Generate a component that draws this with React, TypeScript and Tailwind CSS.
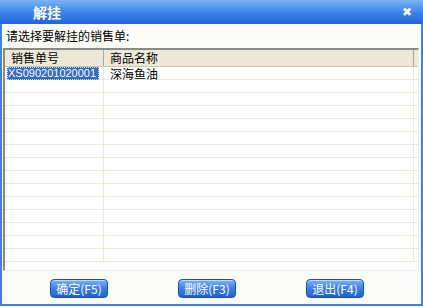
import React from 'react';

const font = { fontFamily: '"Noto Sans CJK SC", "DejaVu Sans", sans-serif' };

const rows = [
  { no: 'XS090201020001', name: '深海鱼油' },
  ...Array.from({ length: 14 }, () => ({ no: '', name: '' })),
];

function Btn({ label }: { label: string }) {
  return (
    <button
      className="w-[58px] h-[19px] rounded-[4px] border border-[#1c4fb8] bg-gradient-to-b from-[#7fb2f5] via-[#3b7ee8] to-[#245fd0] text-white text-[12px] leading-[17px] flex items-center justify-center shadow-[inset_0_1px_0_rgba(255,255,255,0.5)]"
      style={font}
    >
      {label}
    </button>
  );
}

export default function App() {
  return (
    <div className="w-[423px] h-[308px] bg-white" style={font}>
      <div className="w-[423px] h-[306px] flex flex-col bg-[#3d82e4] px-[2px] pb-[2px]">
        {/* title bar */}
        <div className="h-[24px] -mx-[2px] pl-[33px] pr-[20px] flex items-center justify-between bg-gradient-to-b from-[#79b4f4] via-[#3a86ea] to-[#2563d8]">
          <span className="text-white font-bold text-[14px]">解挂</span>
          <span className="text-white font-bold text-[12px] -mr-[9px] mt-[-2px]">✖</span>
        </div>
        <div className="flex-1 flex flex-col bg-[#fbfbf8]">
          <div className="h-[24px] pl-[4px] pt-[4px] text-[12px] leading-[16px] text-black">请选择要解挂的销售单:</div>
          <div className="mx-[1px] mr-[2px] border-t-2 border-l-2 border-t-[#8a8a86] border-l-[#8a8a86] border-r border-b border-r-[#f0f0ec] border-b-[#f0f0ec] bg-white h-[223px] overflow-hidden">
            <div className="flex h-[17px] bg-[#ece9d8] border-b border-[#c9c6b4] text-[12px] leading-[16px] text-black">
              <div className="w-[99px] pl-[6px] border-r border-[#aca899]">销售单号</div>
              <div className="w-[310px] pl-[6px] border-r border-[#aca899]">商品名称</div>
              <div className="flex-1" />
            </div>
            {rows.map((r, i) => (
              <div key={i} className="flex h-[13px] border-b border-[#ebe8dc] text-[12px] leading-[13px]">
                <div className="w-[99px] border-r border-[#ebe8dc] pl-[2px]">
                  {r.no && (
                    <span className="inline-block w-[92px] h-[13px] pl-[1px] bg-[#316ac5] text-white outline outline-1 outline-dotted outline-[#c8d8f0] -outline-offset-1 text-[11px] leading-[13px] whitespace-nowrap overflow-hidden" style={{ fontFamily: '"Liberation Sans", sans-serif' }}>
                      {r.no}
                    </span>
                  )}
                </div>
                <div className="w-[310px] border-r border-[#ebe8dc] pl-[6px]">{r.name}</div>
                <div className="flex-1" />
              </div>
            ))}
          </div>
          <div className="flex-1 flex items-center pl-[48px] gap-[70px] pt-[1px]">
            <Btn label="确定(F5)" />
            <Btn label="删除(F3)" />
            <Btn label="退出(F4)" />
          </div>
        </div>
      </div>
    </div>
  );
}
